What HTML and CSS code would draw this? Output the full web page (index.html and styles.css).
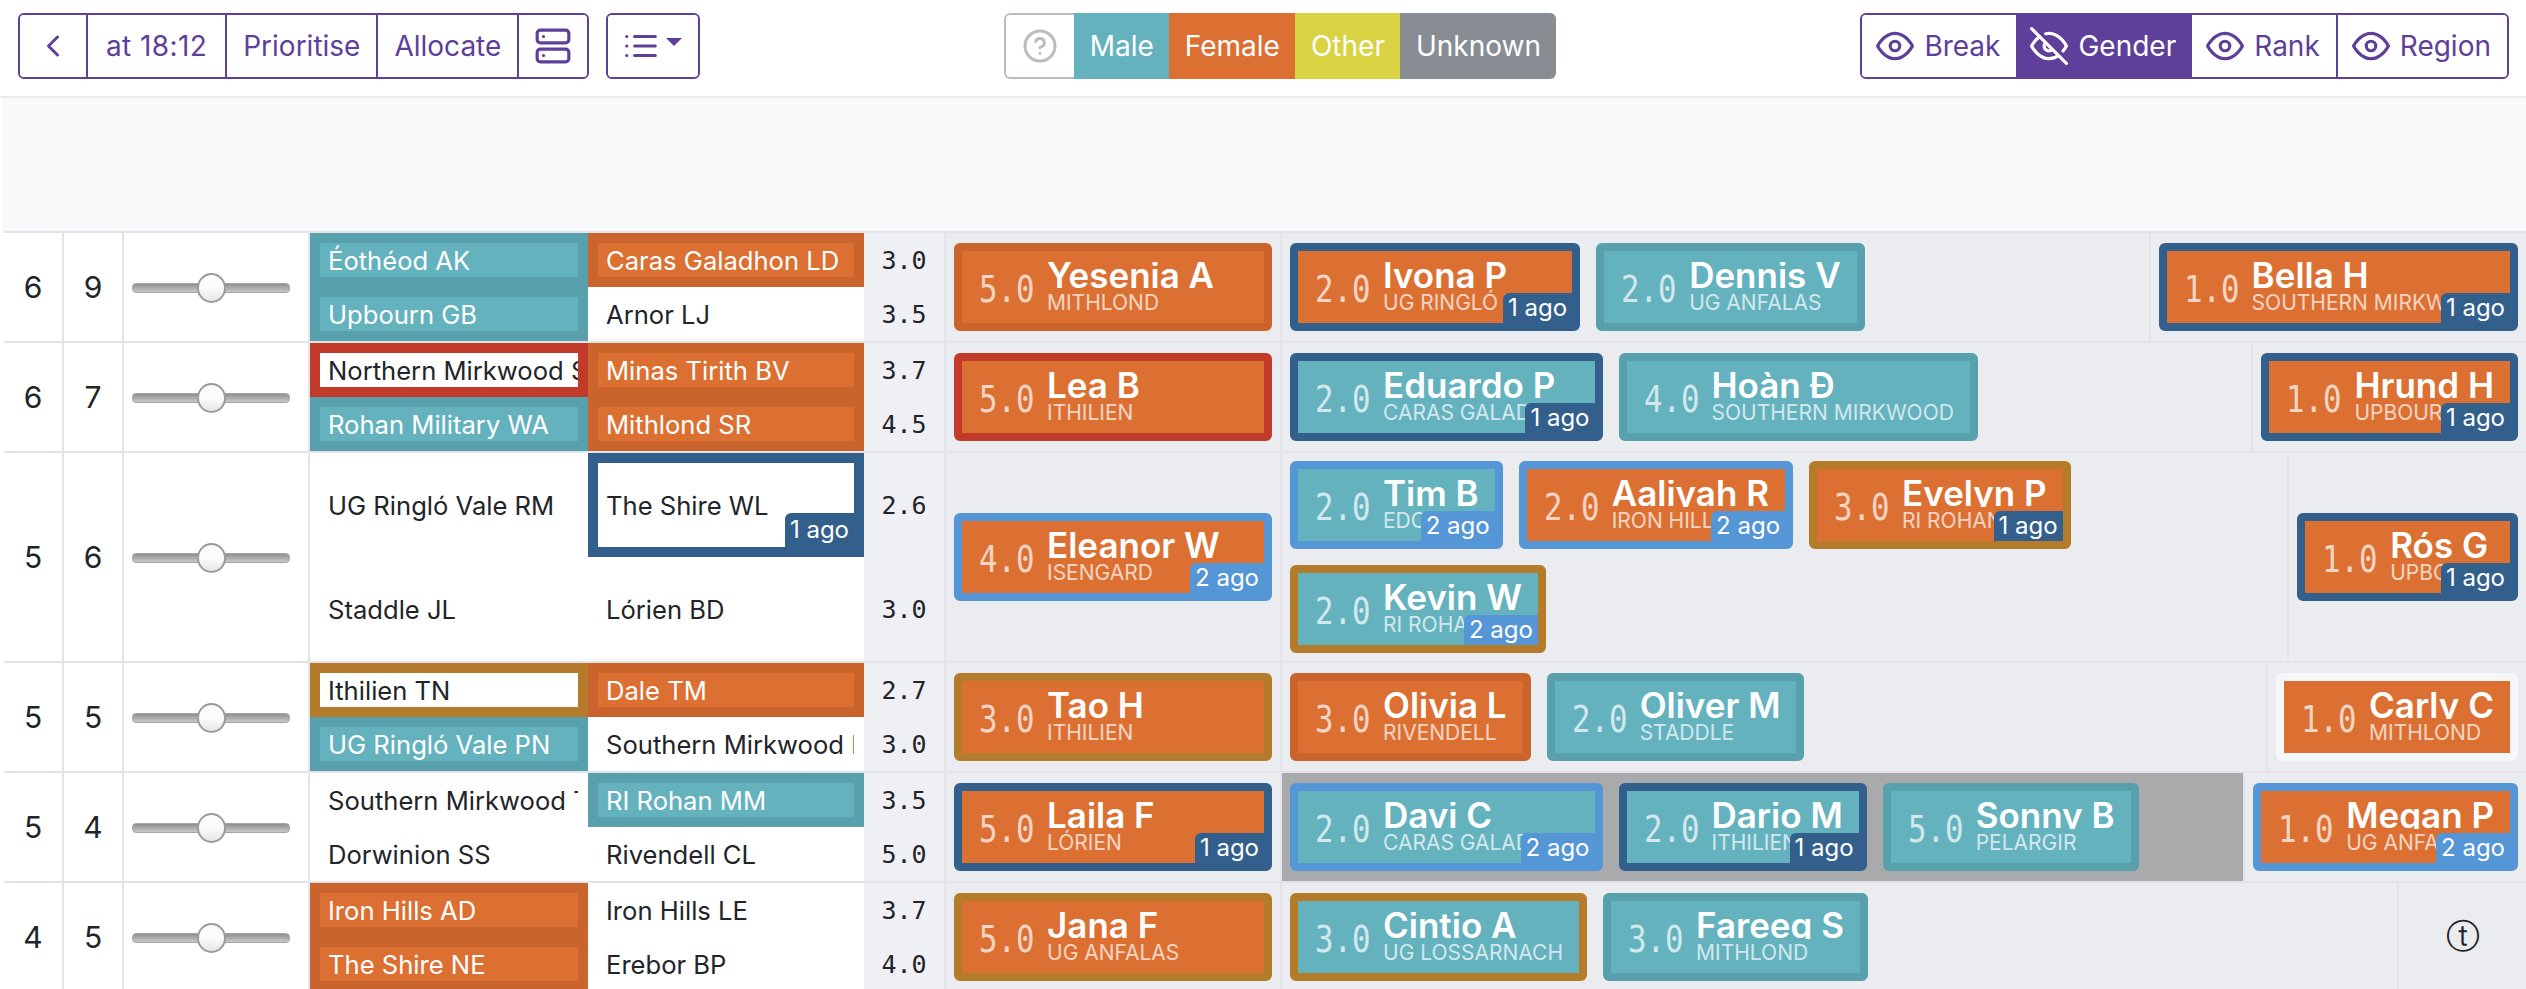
FILE: index.html
```html
<!DOCTYPE html>
<html lang="en">
<head>
  <meta charset="UTF-8">
  <title>Draft board</title>
  <link rel="stylesheet" href="styles.css">
</head>
<body>
  <div class="toolbar">
    <div class="tools-left">
      <div class="btn-group">
        <button class="btn"><svg class="ic ic-back" viewBox="0 0 24 24"><polyline points="15 18 9 12 15 6"/></svg></button>
        <button class="btn btn-time">at 18:12</button>
        <button class="btn">Prioritise</button>
        <button class="btn">Allocate</button>
        <button class="btn btn-icon"><svg class="ic ic-server" viewBox="0 0 24 24"><rect x="2" y="2" width="20" height="8" rx="2"/><rect x="2" y="14" width="20" height="8" rx="2"/><line x1="6" y1="6" x2="6.01" y2="6"/><line x1="6" y1="18" x2="6.01" y2="18"/></svg></button>
      </div>
      <div class="btn-group">
        <button class="btn btn-menu"><svg class="ic ic-list" viewBox="0 0 24 24"><line x1="8" y1="6" x2="21" y2="6"/><line x1="8" y1="12" x2="21" y2="12"/><line x1="8" y1="18" x2="21" y2="18"/><line x1="3" y1="6" x2="3.01" y2="6"/><line x1="3" y1="12" x2="3.01" y2="12"/><line x1="3" y1="18" x2="3.01" y2="18"/></svg><span class="caret"></span></button>
      </div>
    </div>

    <div class="legend">
      <span class="legend-help"><svg class="ic" viewBox="0 0 24 24"><circle cx="12" cy="12" r="10"/><path d="M9.09 9a3 3 0 0 1 5.83 1c0 2-3 3-3 3"/><line x1="12" y1="17" x2="12.01" y2="17"/></svg></span>
      <span class="legend-item male">Male</span>
      <span class="legend-item female">Female</span>
      <span class="legend-item other">Other</span>
      <span class="legend-item unknown">Unknown</span>
    </div>

    <div class="btn-group">
      <button class="btn btn-eye"><svg class="ic" viewBox="0 0 24 24"><path d="M1 12s4-8 11-8 11 8 11 8-4 8-11 8-11-8-11-8z"/><circle cx="12" cy="12" r="3"/></svg>Break</button>
      <button class="btn btn-eye active"><svg class="ic" viewBox="0 0 24 24"><path d="M17.94 17.94A10.07 10.07 0 0 1 12 20c-7 0-11-8-11-8a18.45 18.45 0 0 1 5.06-5.94M9.9 4.24A9.12 9.12 0 0 1 12 4c7 0 11 8 11 8a18.5 18.5 0 0 1-2.16 3.19m-6.72-1.07a3 3 0 1 1-4.24-4.24"/><line x1="1" y1="1" x2="23" y2="23"/></svg>Gender</button>
      <button class="btn btn-eye"><svg class="ic" viewBox="0 0 24 24"><path d="M1 12s4-8 11-8 11 8 11 8-4 8-11 8-11-8-11-8z"/><circle cx="12" cy="12" r="3"/></svg>Rank</button>
      <button class="btn btn-eye"><svg class="ic" viewBox="0 0 24 24"><path d="M1 12s4-8 11-8 11 8 11 8-4 8-11 8-11-8-11-8z"/><circle cx="12" cy="12" r="3"/></svg>Region</button>
    </div>
  </div>

  <div class="band"></div>

  <div class="board">

    <div class="row">
      <div class="num">6</div>
      <div class="num">9</div>
      <div class="slide"><input type="range" value="50"></div>
      <div class="pairs">
        <div class="team male"><div class="team-in">Éothéod AK</div></div>
        <div class="team female"><div class="team-in">Caras Galadhon LD</div></div>
        <div class="rate">3.0</div>
        <div class="team male"><div class="team-in">Upbourn GB</div></div>
        <div class="team"><div class="team-in">Arnor LJ</div></div>
        <div class="rate">3.5</div>
      </div>
      <div class="rank first">
        <div class="card female"><span class="score">5.0</span><div class="who"><div class="name">Yesenia A</div><div class="region">Mithlond</div></div></div>
      </div>
      <div class="rank mid">
        <div class="card female age1"><span class="score">2.0</span><div class="who"><div class="name">Ivona P</div><div class="region">UG Ringló Vale</div></div><span class="ago age1">1 ago</span></div>
        <div class="card male"><span class="score">2.0</span><div class="who"><div class="name">Dennis V</div><div class="region">UG Anfalas</div></div></div>
      </div>
      <div class="rank last">
        <div class="card female age1"><span class="score">1.0</span><div class="who"><div class="name">Bella H</div><div class="region">Southern Mirkwood</div></div><span class="ago age1">1 ago</span></div>
      </div>
    </div>

    <div class="row">
      <div class="num">6</div>
      <div class="num">7</div>
      <div class="slide"><input type="range" value="50"></div>
      <div class="pairs">
        <div class="team plain-red"><div class="team-in">Northern Mirkwood SK</div></div>
        <div class="team female"><div class="team-in">Minas Tirith BV</div></div>
        <div class="rate">3.7</div>
        <div class="team male"><div class="team-in">Rohan Military WA</div></div>
        <div class="team female"><div class="team-in">Mithlond SR</div></div>
        <div class="rate">4.5</div>
      </div>
      <div class="rank first">
        <div class="card female red"><span class="score">5.0</span><div class="who"><div class="name">Lea B</div><div class="region">Ithilien</div></div></div>
      </div>
      <div class="rank mid">
        <div class="card male age1"><span class="score">2.0</span><div class="who"><div class="name">Eduardo P</div><div class="region">Caras Galadhon</div></div><span class="ago age1">1 ago</span></div>
        <div class="card male"><span class="score">4.0</span><div class="who"><div class="name">Hoàn Đ</div><div class="region">Southern Mirkwood</div></div></div>
      </div>
      <div class="rank last">
        <div class="card female age1"><span class="score">1.0</span><div class="who"><div class="name">Hrund H</div><div class="region">Upbourn</div></div><span class="ago age1">1 ago</span></div>
      </div>
    </div>

    <div class="row">
      <div class="num">5</div>
      <div class="num">6</div>
      <div class="slide"><input type="range" value="50"></div>
      <div class="pairs">
        <div class="team"><div class="team-in">UG Ringló Vale RM</div></div>
        <div class="team plain-blue"><div class="team-in">The Shire WL<span class="ago age1 ago-team">1 ago</span></div></div>
        <div class="rate">2.6</div>
        <div class="team"><div class="team-in">Staddle JL</div></div>
        <div class="team"><div class="team-in">Lórien BD</div></div>
        <div class="rate">3.0</div>
      </div>
      <div class="rank first">
        <div class="card female age2"><span class="score">4.0</span><div class="who"><div class="name">Eleanor W</div><div class="region">Isengard</div></div><span class="ago age2">2 ago</span></div>
      </div>
      <div class="rank mid">
        <div class="card male age2"><span class="score">2.0</span><div class="who"><div class="name">Tim B</div><div class="region">Edoras</div></div><span class="ago age2">2 ago</span></div>
        <div class="card female age2"><span class="score">2.0</span><div class="who"><div class="name">Aaliyah R</div><div class="region">Iron Hills</div></div><span class="ago age2">2 ago</span></div>
        <div class="card female brown"><span class="score">3.0</span><div class="who"><div class="name">Evelyn P</div><div class="region">RI Rohan</div></div><span class="ago age1">1 ago</span></div>
        <div class="card male brown"><span class="score">2.0</span><div class="who"><div class="name">Kevin W</div><div class="region">RI Rohan</div></div><span class="ago age2">2 ago</span></div>
      </div>
      <div class="rank last">
        <div class="card female age1"><span class="score">1.0</span><div class="who"><div class="name">Rós G</div><div class="region">Upbourn</div></div><span class="ago age1">1 ago</span></div>
      </div>
    </div>

    <div class="row">
      <div class="num">5</div>
      <div class="num">5</div>
      <div class="slide"><input type="range" value="50"></div>
      <div class="pairs">
        <div class="team plain-brown"><div class="team-in">Ithilien TN</div></div>
        <div class="team female"><div class="team-in">Dale TM</div></div>
        <div class="rate">2.7</div>
        <div class="team male"><div class="team-in">UG Ringló Vale PN</div></div>
        <div class="team"><div class="team-in">Southern Mirkwood LP</div></div>
        <div class="rate">3.0</div>
      </div>
      <div class="rank first">
        <div class="card female brown"><span class="score">3.0</span><div class="who"><div class="name">Tao H</div><div class="region">Ithilien</div></div></div>
      </div>
      <div class="rank mid">
        <div class="card female"><span class="score">3.0</span><div class="who"><div class="name">Olivia L</div><div class="region">Rivendell</div></div></div>
        <div class="card male"><span class="score">2.0</span><div class="who"><div class="name">Oliver M</div><div class="region">Staddle</div></div></div>
      </div>
      <div class="rank last">
        <div class="card female pale"><span class="score">1.0</span><div class="who"><div class="name">Carly C</div><div class="region">Mithlond</div></div></div>
      </div>
    </div>

    <div class="row">
      <div class="num">5</div>
      <div class="num">4</div>
      <div class="slide"><input type="range" value="50"></div>
      <div class="pairs">
        <div class="team"><div class="team-in">Southern Mirkwood TH</div></div>
        <div class="team male"><div class="team-in">RI Rohan MM</div></div>
        <div class="rate">3.5</div>
        <div class="team"><div class="team-in">Dorwinion SS</div></div>
        <div class="team"><div class="team-in">Rivendell CL</div></div>
        <div class="rate">5.0</div>
      </div>
      <div class="rank first">
        <div class="card female age1"><span class="score">5.0</span><div class="who"><div class="name">Laila F</div><div class="region">Lórien</div></div><span class="ago age1">1 ago</span></div>
      </div>
      <div class="rank mid on-clock">
        <div class="card male age2"><span class="score">2.0</span><div class="who"><div class="name">Davi C</div><div class="region">Caras Galadhon</div></div><span class="ago age2">2 ago</span></div>
        <div class="card male age1"><span class="score">2.0</span><div class="who"><div class="name">Dario M</div><div class="region">Ithilien</div></div><span class="ago age1">1 ago</span></div>
        <div class="card male"><span class="score">5.0</span><div class="who"><div class="name">Sonny B</div><div class="region">Pelargir</div></div></div>
      </div>
      <div class="rank last">
        <div class="card female age2"><span class="score">1.0</span><div class="who"><div class="name">Megan P</div><div class="region">UG Anfalas</div></div><span class="ago age2">2 ago</span></div>
      </div>
    </div>

    <div class="row">
      <div class="num">4</div>
      <div class="num">5</div>
      <div class="slide"><input type="range" value="50"></div>
      <div class="pairs">
        <div class="team female"><div class="team-in">Iron Hills AD</div></div>
        <div class="team"><div class="team-in">Iron Hills LE</div></div>
        <div class="rate">3.7</div>
        <div class="team female"><div class="team-in">The Shire NE</div></div>
        <div class="team"><div class="team-in">Erebor BP</div></div>
        <div class="rate">4.0</div>
      </div>
      <div class="rank first">
        <div class="card female brown"><span class="score">5.0</span><div class="who"><div class="name">Jana F</div><div class="region">UG Anfalas</div></div></div>
      </div>
      <div class="rank mid">
        <div class="card male brown"><span class="score">3.0</span><div class="who"><div class="name">Cintio A</div><div class="region">UG Lossarnach</div></div></div>
        <div class="card male"><span class="score">3.0</span><div class="who"><div class="name">Fareeq S</div><div class="region">Mithlond</div></div></div>
      </div>
      <div class="rank last tee">ⓣ</div>
    </div>

  </div>
</body>
</html>
```

FILE: styles.css
```css
* {
  box-sizing: border-box;
}

html, body {
  margin: 0;
  height: 100%;
  overflow: hidden;
}

body {
  font-family: Inter, "Liberation Sans", sans-serif;
  font-size: 25.6px;
  color: #212529;
  background: #fff;
}

.ic {
  width: 38px;
  height: 38px;
  fill: none;
  stroke: currentColor;
  stroke-width: 2;
  stroke-linecap: round;
  stroke-linejoin: round;
  flex: none;
}

/* toolbar */
.toolbar {
  display: flex;
  justify-content: space-between;
  align-items: flex-start;
  height: 98px;
  padding: 13px 17px 0 18px;
  border-bottom: 2px solid #e9ebef;
  font-size: 28px;
}

.tools-left {
  display: flex;
  gap: 17px;
}

.btn-group {
  display: flex;
  height: 66px;
  border: 2px solid #5e3f9a;
  border-radius: 6px;
  overflow: hidden;
}

.btn {
  display: flex;
  align-items: center;
  padding: 0 16px;
  border: 0;
  border-left: 2px solid #5e3f9a;
  background: #fff;
  color: #5e3f9a;
  font: inherit;
}

.btn:first-child {
  border-left: 0;
}

.btn.active {
  background: #5e3f9a;
  color: #fff;
}

.btn-time {
  padding: 0 18px;
  letter-spacing: 0.4px;
}

.btn-icon {
  padding: 0 15px;
}

.ic-back {
  margin: 0 -1px;
  width: 36px;
  height: 36px;
}

.btn-menu {
  gap: 6px;
  padding: 0 16px 0 14px;
}

.caret {
  border-top: 8px solid #5e3f9a;
  border-left: 8px solid transparent;
  border-right: 8px solid transparent;
  margin-bottom: 8px;
}

.btn-eye {
  gap: 10px;
  padding: 0 16px 0 14px;
}

.active + .btn-eye {
  border-left: 0;
}

.active {
  border-left: 0;
}

.legend {
  display: flex;
  height: 66px;
  border-radius: 6px;
  overflow: hidden;
}

.legend-help {
  display: flex;
  align-items: center;
  justify-content: center;
  width: 70px;
  border: 2px solid #b9bdc3;
  border-right: 0;
  border-radius: 6px 0 0 6px;
  color: #b9bdc3;
}

.legend-help .ic {
  width: 36px;
  height: 36px;
}

.legend-item {
  display: flex;
  align-items: center;
  padding: 0 15.5px;
  color: #fff;
}

.legend-item.male { background: #65b2bf; }
.legend-item.female { background: #dc7032; }
.legend-item.other { background: #d9d243; }
.legend-item.unknown { background: #888d94; }

/* empty band over the board */
.band {
  height: 133px;
  margin-left: 2px;
  background: #f8f9fb;
}

/* board */
.board {
  padding-left: 4px;
}

.row {
  display: flex;
  margin-left: -2px;
  padding-left: 2px;
}

.row > * {
  border-top: 2px solid #e2e4e9;
}

.num {
  display: flex;
  align-items: center;
  justify-content: center;
  flex: none;
  width: 60px;
  border-right: 2px solid #e2e4e9;
  font-size: 30px;
}

.slide {
  display: flex;
  align-items: center;
  flex: none;
  width: 186px;
  padding: 2px 0 0 8px;
  border-right: 2px solid #e2e4e9;
}

.slide input {
  -webkit-appearance: none;
  appearance: none;
  width: 158px;
  height: 30px;
  margin: 0;
  background: transparent;
}

.slide input::-webkit-slider-runnable-track {
  height: 10px;
  border: 1px solid #a5a5a5;
  border-radius: 4px;
  background: linear-gradient(#8f8f8f, #c9c9c9);
}

.slide input::-webkit-slider-thumb {
  -webkit-appearance: none;
  width: 29px;
  height: 30px;
  margin-top: -11px;
  border: 2px solid #9b9b9b;
  border-radius: 50%;
  background: linear-gradient(#fbfbfb 50%, #e6e6e6);
}

.pairs {
  display: grid;
  flex: none;
  grid-template-columns: 278px 276px 80px;
  grid-auto-rows: minmax(54px, 1fr);
  width: 636px;
  border-right: 2px solid #e2e4e9;
}

.team {
  min-width: 0;
  padding: 10px;
}

.team-in {
  position: relative;
  display: flex;
  align-items: center;
  height: 100%;
  padding: 0 8px;
  overflow: hidden;
  white-space: nowrap;
}

.team.male { background: #58a0ab; }
.team.male .team-in { background: #65b2bf; color: #fff; }
.team.female { background: #c9652c; }
.team.female .team-in { background: #dc7032; color: #fff; }
.team.plain-red { background: #c13a2a; }
.team.plain-brown { background: #b47b2b; }
.team.plain-blue { background: #335f8d; }
.team.plain-red .team-in,
.team.plain-brown .team-in,
.team.plain-blue .team-in { background: #fff; }

.rate {
  display: flex;
  align-items: center;
  justify-content: center;
  background: #eff0f3;
  font-family: "DejaVu Sans Mono", monospace;
  font-size: 25px;
}

.rank {
  display: flex;
  align-items: center;
  background: #ebecf0;
}

.first {
  flex: none;
  width: 336px;
  border-right: 2px solid #e2e4e9;
}

.first .card {
  width: 318px;
}

.mid {
  flex: 1;
  flex-wrap: wrap;
  align-content: center;
  min-width: 0;
}

.on-clock {
  background: #a9aaac;
}

.last {
  flex: none;
  border-left: 2px solid #e2e4e9;
}

.tee {
  justify-content: center;
  width: 129px;
  font-family: "DejaVu Sans", sans-serif;
  font-size: 34px;
}

/* player cards */
.card {
  position: relative;
  display: flex;
  flex: none;
  height: 88px;
  margin: 8px;
  padding: 0 16px 0 17px;
  border: 8px solid;
  border-radius: 6px;
  color: #fff;
  white-space: nowrap;
}

.card.male { background: #65b2bf; border-color: #58a0ab; }
.card.female { background: #dc7032; border-color: #c9652c; }
.card.age1 { border-color: #335f8d; }
.card.age2 { border-color: #5596d6; }
.card.brown { border-color: #b47b2b; }
.card.red { border-color: #c13a2a; }
.card.pale { border-color: #f6f7f9; }

.score {
  align-self: center;
  width: 58px;
  margin-right: 10px;
  padding-top: 4px;
  font-family: "DejaVu Sans Mono", monospace;
  font-size: 38px;
  opacity: 0.7;
  transform: scaleX(0.81);
  transform-origin: left;
}

.who {
  padding-top: 11px;
}

.name {
  height: 27px;
  overflow: hidden;
  font-size: 35px;
  font-weight: 600;
  line-height: 27px;
}

.region {
  font-size: 21px;
  line-height: 28px;
  text-transform: uppercase;
  opacity: 0.7;
}

.ago {
  position: absolute;
  right: 0;
  bottom: 0;
  height: 30px;
  padding: 0 5px;
  overflow: hidden;
  border-top-left-radius: 6px;
  color: #fff;
  font-size: 24px;
  line-height: 30px;
}

.ago.age1 { background: #335f8d; }
.ago.age2 { background: #5596d6; }

.ago-team {
  height: 34px;
  line-height: 34px;
}
```
